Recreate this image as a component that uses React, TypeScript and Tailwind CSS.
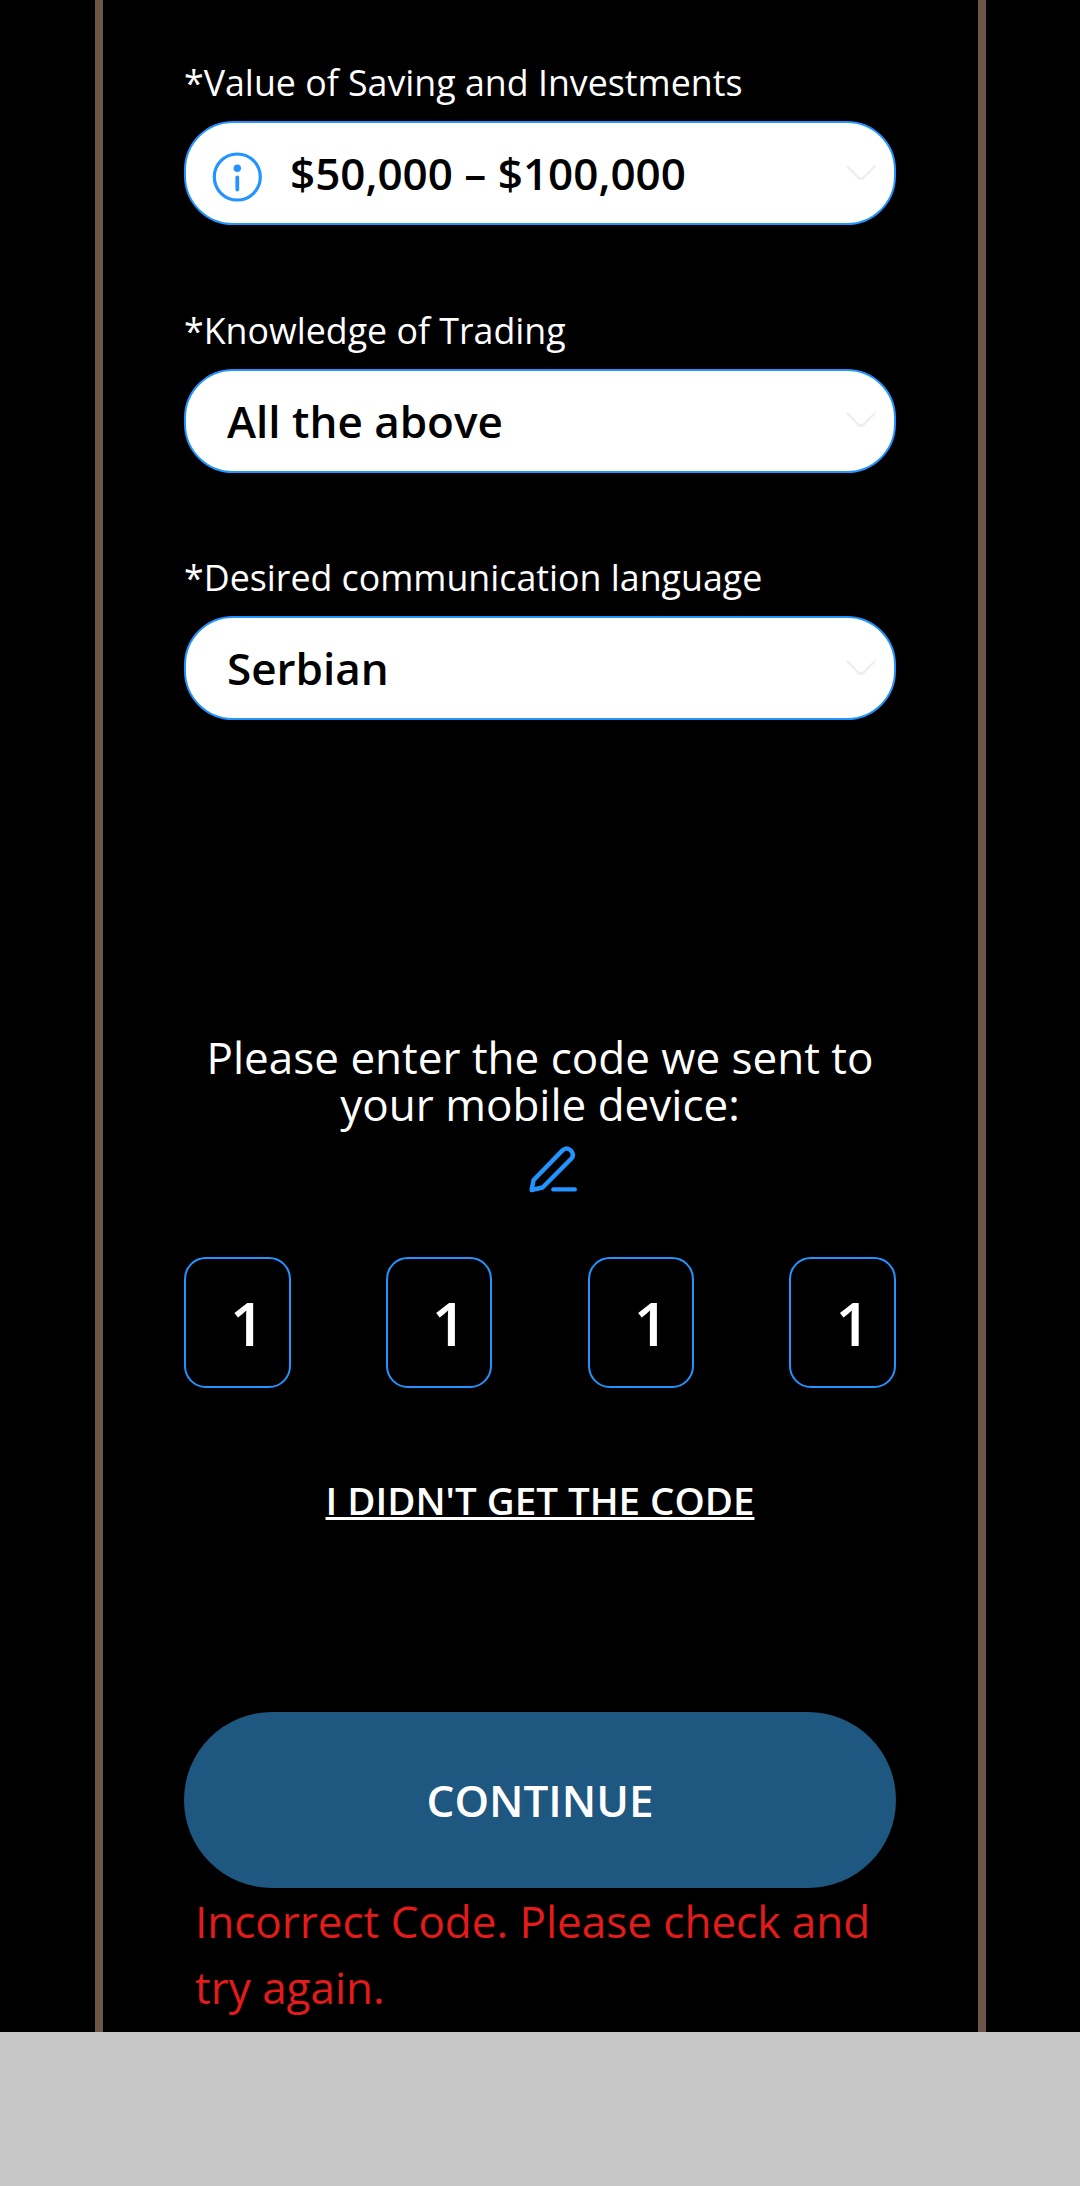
import type { ReactNode } from "react";

function InfoIcon() {
  return (
    <svg className="mt-2 h-[50px] w-[50px] shrink-0" viewBox="0 0 50 50" fill="none">
      <circle cx="25.3" cy="25" r="23" stroke="#2394ff" strokeWidth="3.2" />
      <circle cx="25.3" cy="16.3" r="3.7" fill="#2394ff" />
      <path d="M25.3 25.5V37.5" stroke="#2394ff" strokeWidth="3.8" strokeLinecap="round" />
    </svg>
  );
}

function Chevron() {
  return (
    <svg className="mb-px h-4 w-[30px] shrink-0" viewBox="0 0 30 16" fill="none">
      <path d="M1.5 1.5L12.3 12.5Q15 15 17.7 12.5L28.5 1.5" stroke="#eeeeee" strokeWidth="2.4" strokeLinecap="round" />
    </svg>
  );
}

function PenIcon() {
  return (
    <svg className="h-[50px] w-[50px]" viewBox="0 0 50 50" fill="none" stroke="#2394ff" strokeWidth="4.4">
      <path d="M3.6 46L5.6 36L34.5 6.4Q38.5 2.6 42.8 6.4Q46.8 10.8 43.2 14.8L14.6 43.5Z" strokeLinejoin="round" />
      <path d="M25.4 45.4H46.8" strokeLinecap="round" />
    </svg>
  );
}

function Field({ label, value, icon, className }: { label: string; value: string; icon?: ReactNode; className: string }) {
  return (
    <div className={className}>
      <div className="h-[54px] text-[35.75px] leading-[54px] whitespace-nowrap">{label}</div>
      <button className="mt-3 flex h-[104px] w-full items-center rounded-[49px] border-2 border-[#2394ff] bg-white pr-[18px] pl-[26px] text-left font-semibold text-black">
        {icon}
        <span className={icon ? "ml-[28px] flex-1 text-[44px] leading-[60px]" : "ml-[15px] flex-1 text-[44px] leading-[60px]"}>{value}</span>
        <Chevron />
      </button>
    </div>
  );
}

export default function App() {
  return (
    <div className="h-[2186px] w-[1080px] overflow-hidden bg-[#c7c7c7] font-['Open_Sans',sans-serif] text-white">
      <div className="h-[2032px] bg-black pr-[94px] pl-[95px]">
        <main className="flex h-full flex-col border-x-8 border-[#6b5648] pr-[82px] pl-[81px] pt-[55px]">
          <Field className="h-[247.5px]" label="*Value of Saving and Investments" value="$50,000 – $100,000" icon={<InfoIcon />} />
          <Field className="h-[247.5px]" label="*Knowledge of Trading" value="All the above" />
          <Field className="h-[170px]" label="*Desired communication language" value="Serbian" />
          <p className="mt-[314px] text-center text-[44px] leading-[47px]">
            Please enter the code we sent to
            <br />
            your mobile device:
          </p>
          <div className="mt-4 flex justify-center pl-[26px]">
            <PenIcon />
          </div>
          <div className="mt-[63px] flex justify-between">
            {[0, 1, 2, 3].map((i) => (
              <div key={i} className="h-[131px] w-[106.5px] rounded-[22px] border-2 border-[#2394ff] pl-[44px] text-[60.5px] leading-[127px] font-semibold">
                1
              </div>
            ))}
          </div>
          <a className="mt-[86px] h-[52px] text-center text-[38.5px] leading-[52px] font-semibold underline">I DIDN'T GET THE CODE</a>
          <button className="mt-[186px] h-[176px] shrink-0 rounded-full bg-[#1e577f] text-[44px] font-semibold">CONTINUE</button>
          <p className="pl-[11px] text-[44px] leading-[66px] text-[#e21b1b]">
            Incorrect Code. Please check and
            <br />
            try again.
          </p>
        </main>
      </div>
    </div>
  );
}
